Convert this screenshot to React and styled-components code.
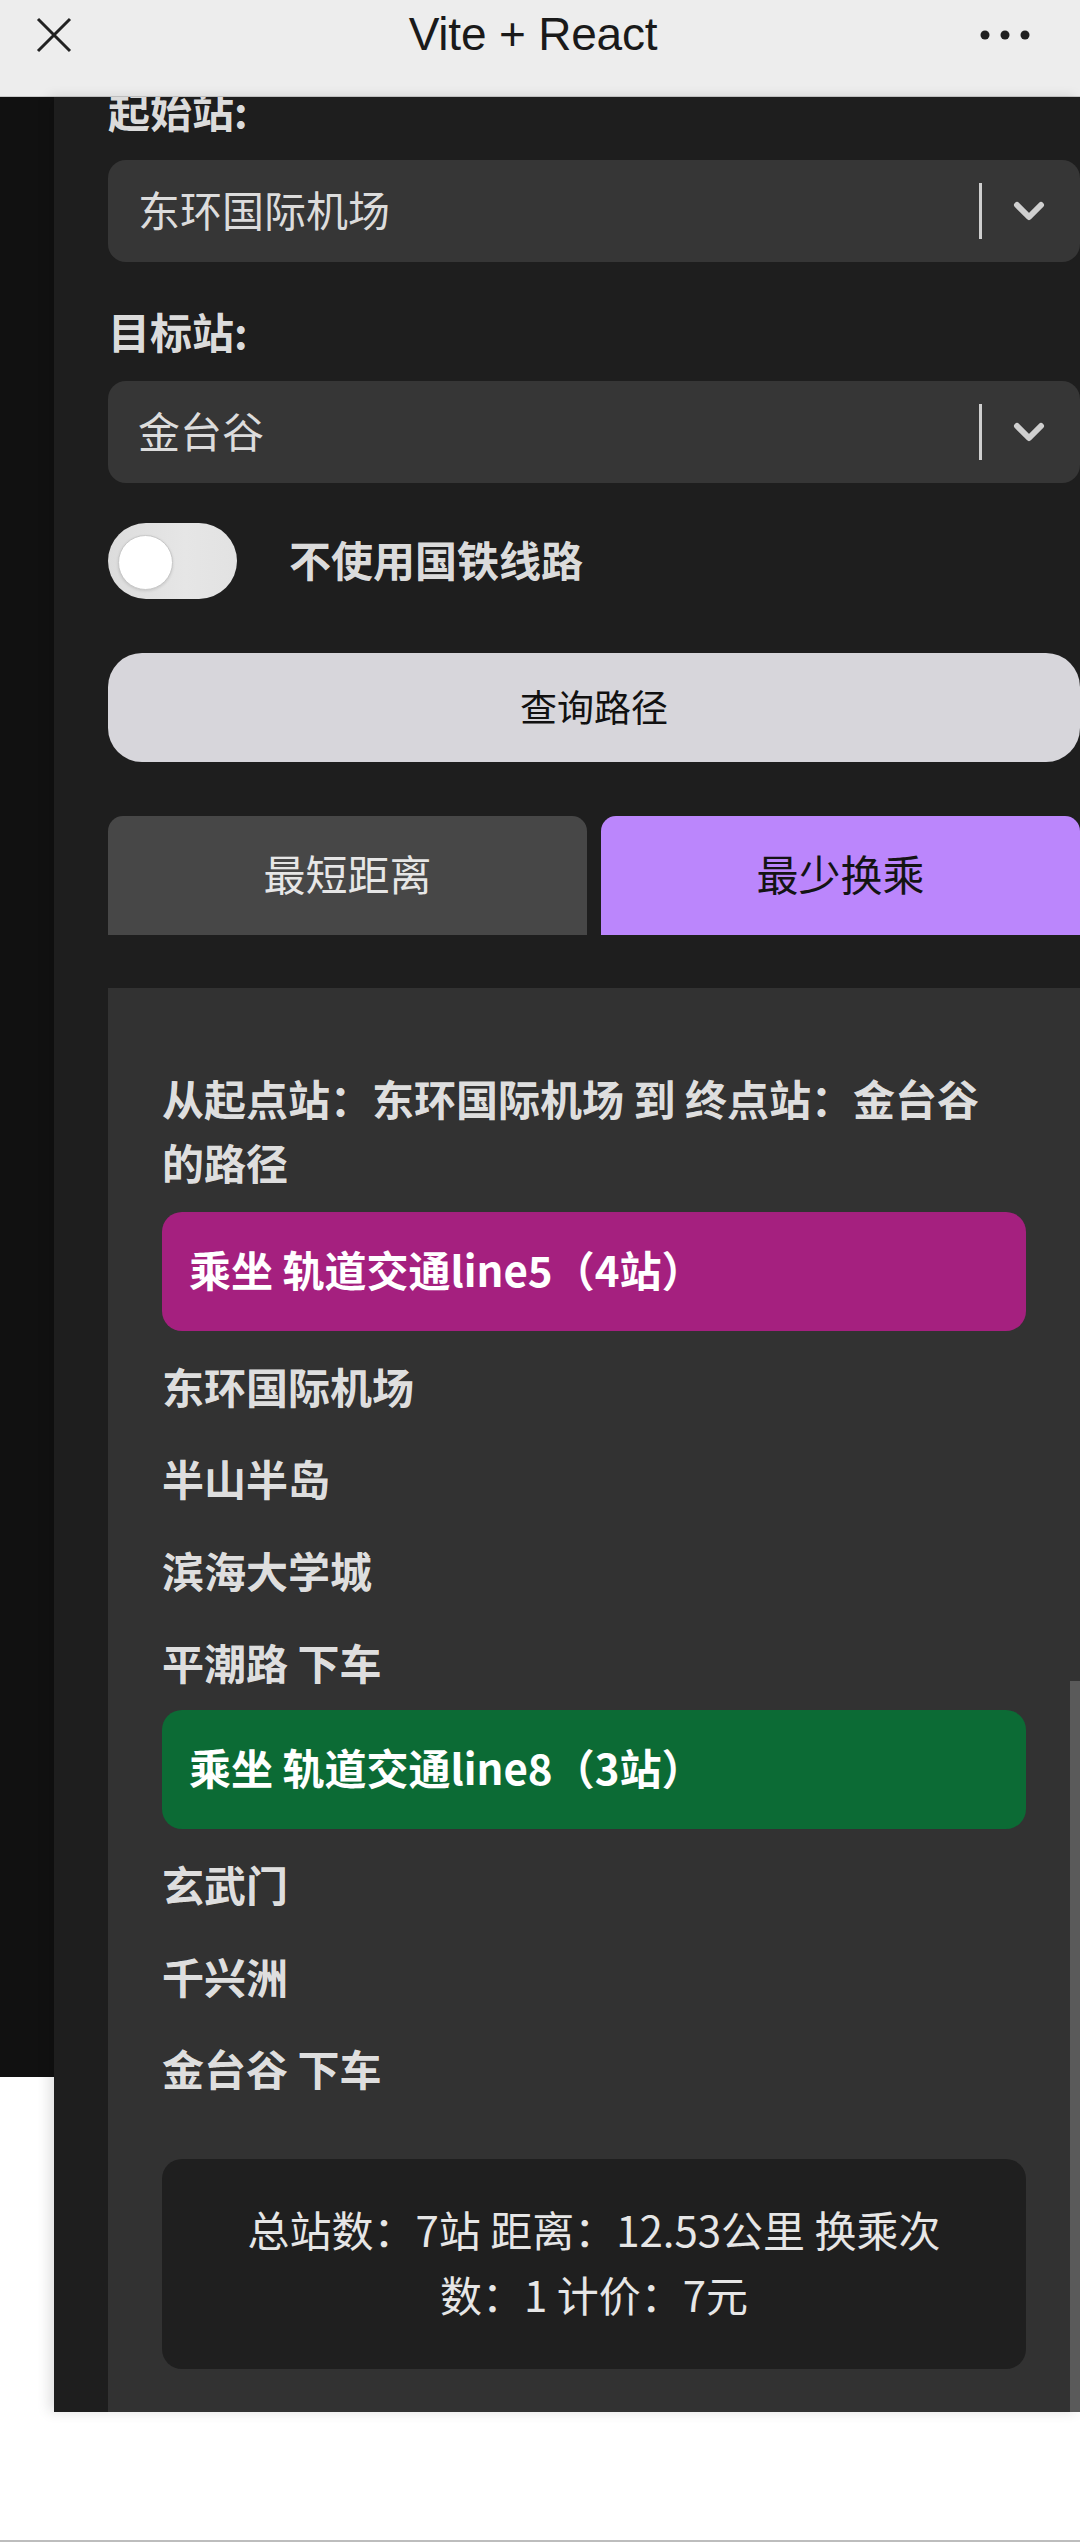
import React, { useState } from "react";
import styled, { createGlobalStyle } from "styled-components";

const GlobalStyle = createGlobalStyle`
  html, body {
    margin: 0;
    padding: 0;
    background: #ffffff;
  }
  #root {
    width: 1080px;
  }
  * {
    box-sizing: border-box;
  }
`;

const FONT = `"Noto Sans CJK SC", "Noto Sans", sans-serif`;

const stops = [
  { line: "轨道交通line5", color: "#a5207f", count: 4, stations: ["东环国际机场", "半山半岛", "滨海大学城", "平潮路 下车"] },
  { line: "轨道交通line8", color: "#0c6b35", count: 3, stations: ["玄武门", "千兴洲", "金台谷 下车"] },
];

const Page = styled.div`
  width: 1080px;
  font-family: ${FONT};
`;

const TopBar = styled.header`
  height: 97px;
  background: #ededed;
  border-bottom: 1px solid #c9c9c9;
  display: grid;
  grid-template-columns: 1fr auto 1fr;
  align-items: center;
  padding: 0 50px 26px 36px;
`;

const TopTitle = styled.div`
  font-family: "Liberation Sans", Arial, sans-serif;
  font-size: 46px;
  line-height: 46px;
  color: #1a1a1a;
  letter-spacing: -0.2px;
  padding-bottom: 2px;
`;

const TopRight = styled.div`
  display: flex;
  justify-content: flex-end;
`;

const Main = styled.div`
  display: flex;
  align-items: flex-start;
`;

const Gutter = styled.div`
  width: 54px;
  flex: none;
`;

const GutterFill = styled.div`
  height: 1980px;
  background: #111111;
`;

const Sheet = styled.div`
  flex: 1;
  background: #1e1e1e;
  padding-left: 54px;
  overflow: hidden;
  box-shadow: -5px 0 12px rgba(0, 0, 0, 0.12);
`;

const Form = styled.div`
  margin-top: -19.5px;
  display: flex;
  flex-direction: column;
`;

const Group = styled.div`
  margin-bottom: ${(p) => (p.last ? "40px" : "36.5px")};
`;

const Label = styled.div`
  font-size: 42px;
  font-weight: 700;
  line-height: 63px;
  color: rgba(255, 255, 255, 0.87);
  margin-bottom: 19.5px;
`;

const Field = styled.div`
  height: 102px;
  background: #363636;
  border-radius: 18px;
  display: flex;
  align-items: center;
  padding-left: 30px;
`;

const FieldValue = styled.div`
  flex: 1;
  font-size: 42px;
  color: #dcdcdc;
  padding-bottom: 6px;
`;

const Separator = styled.div`
  width: 3px;
  height: 56px;
  background: #cfcfcf;
  margin-right: 31px;
`;

const Chevron = styled.svg`
  width: 32px;
  height: 21px;
  margin-right: 35px;
`;

const ToggleRow = styled.div`
  display: flex;
  align-items: center;
  height: 76px;
`;

const Track = styled.div`
  width: 129px;
  height: 76px;
  border-radius: 38px;
  background: linear-gradient(90deg, #dcdcdc 0%, #e6e6e6 60%, #e2e2e2 100%);
  padding: 12px 10px;
  flex: none;
`;

const Knob = styled.div`
  width: 55px;
  height: 55px;
  border-radius: 50%;
  background: #ffffff;
  border: 1px solid #c8c8c8;
  box-shadow: 0 1px 3px rgba(0, 0, 0, 0.12);
`;

const ToggleText = styled.span`
  margin-left: 52px;
  font-size: 42px;
  font-weight: 700;
  color: rgba(255, 255, 255, 0.87);
  padding-bottom: 6px;
`;

const QueryButton = styled.button`
  margin-top: 54px;
  height: 109px;
  width: 100%;
  border: none;
  border-radius: 34px;
  background: #d7d6db;
  font-family: ${FONT};
  font-size: 37px;
  color: #111;
  padding: 0 0 3px;
`;

const Tabs = styled.div`
  margin-top: 54px;
  display: grid;
  grid-template-columns: 1fr 1fr;
  gap: 14px;
`;

const Tab = styled.div`
  height: 119px;
  border-radius: 15px 15px 0 0;
  display: flex;
  align-items: center;
  justify-content: center;
  padding-bottom: 6px;
  font-size: 42px;
  background: ${(p) => (p.active ? "#bb86fc" : "#474747")};
  color: ${(p) => (p.active ? "#141414" : "#e6e6e6")};
`;

const ResultPanel = styled.section`
  position: relative;
  margin-top: 53px;
  background: #323232;
  padding: 78px 54px 43px 54px;
`;

const Heading = styled.div`
  font-size: 42px;
  font-weight: 700;
  line-height: 64px;
  color: rgba(255, 255, 255, 0.87);
  word-break: keep-all;
  margin-bottom: 18px;
`;

const LineCard = styled.div`
  height: 119px;
  border-radius: 20px;
  background: ${(p) => p.color};
  display: flex;
  align-items: center;
  padding: 0 27px 6px;
  font-size: 42px;
  font-weight: 700;
  color: #ffffff;
  margin-bottom: 11px;
`;

const Station = styled.div`
  font-size: 42px;
  font-weight: 700;
  line-height: 63px;
  padding: 11.5px 0 17.5px;
  color: rgba(255, 255, 255, 0.87);
`;

const Summary = styled.div`
  margin-top: 43px;
  background: #1f1f1f;
  border-radius: 20px;
  padding: 37px 76px 43px;
  font-size: 42px;
  line-height: 65px;
  text-align: center;
  color: #e6e6e6;
`;

const ScrollThumb = styled.div`
  position: absolute;
  right: 0;
  top: 693px;
  bottom: 0;
  width: 10px;
  background: #5a5a5a;
`;

const BottomArea = styled.div`
  height: 130px;
  background: #ffffff;
  border-bottom: 2px solid #bdbdbd;
`;

const CloseIcon = () => (
  <svg width="36" height="36" viewBox="0 0 36 36">
    <path d="M2 2 L34 34 M34 2 L2 34" stroke="#222" strokeWidth="3" fill="none" />
  </svg>
);

const MoreIcon = () => (
  <svg width="50" height="10" viewBox="0 0 50 10">
    <circle cx="5" cy="5" r="4.5" fill="#222" />
    <circle cx="25" cy="5" r="4.5" fill="#222" />
    <circle cx="45" cy="5" r="4.5" fill="#222" />
  </svg>
);

const Select = ({ value }) => (
  <Field>
    <FieldValue>{value}</FieldValue>
    <Separator />
    <Chevron viewBox="0 0 32 21">
      <polyline
        points="4,4 16,16 28,4"
        fill="none"
        stroke="#cfcfcf"
        strokeWidth="6"
        strokeLinecap="round"
        strokeLinejoin="round"
      />
    </Chevron>
  </Field>
);

export default function App() {
  const [mode, setMode] = useState("transfer");

  return (
    <Page>
      <GlobalStyle />
      <TopBar>
        <CloseIcon />
        <TopTitle>Vite + React</TopTitle>
        <TopRight>
          <MoreIcon />
        </TopRight>
      </TopBar>
      <Main>
        <Gutter>
          <GutterFill />
        </Gutter>
        <Sheet>
          <Form>
            <Group>
              <Label>起始站:</Label>
              <Select value="东环国际机场" />
            </Group>
            <Group last>
              <Label>目标站:</Label>
              <Select value="金台谷" />
            </Group>
            <ToggleRow>
              <Track>
                <Knob />
              </Track>
              <ToggleText>不使用国铁线路</ToggleText>
            </ToggleRow>
            <QueryButton>查询路径</QueryButton>
            <Tabs>
              <Tab active={mode === "distance"} onClick={() => setMode("distance")}>
                最短距离
              </Tab>
              <Tab active={mode === "transfer"} onClick={() => setMode("transfer")}>
                最少换乘
              </Tab>
            </Tabs>
          </Form>
          <ResultPanel>
            <Heading>从起点站：东环国际机场 到 终点站：金台谷 的路径</Heading>
            {stops.map((seg) => (
              <React.Fragment key={seg.line}>
                <LineCard color={seg.color}>
                  乘坐 {seg.line}（{seg.count}站）
                </LineCard>
                {seg.stations.map((s) => (
                  <Station key={s}>{s}</Station>
                ))}
              </React.Fragment>
            ))}
            <Summary>总站数：7站 距离：12.53公里 换乘次数：1 计价：7元</Summary>
            <ScrollThumb />
          </ResultPanel>
        </Sheet>
      </Main>
      <BottomArea />
    </Page>
  );
}
